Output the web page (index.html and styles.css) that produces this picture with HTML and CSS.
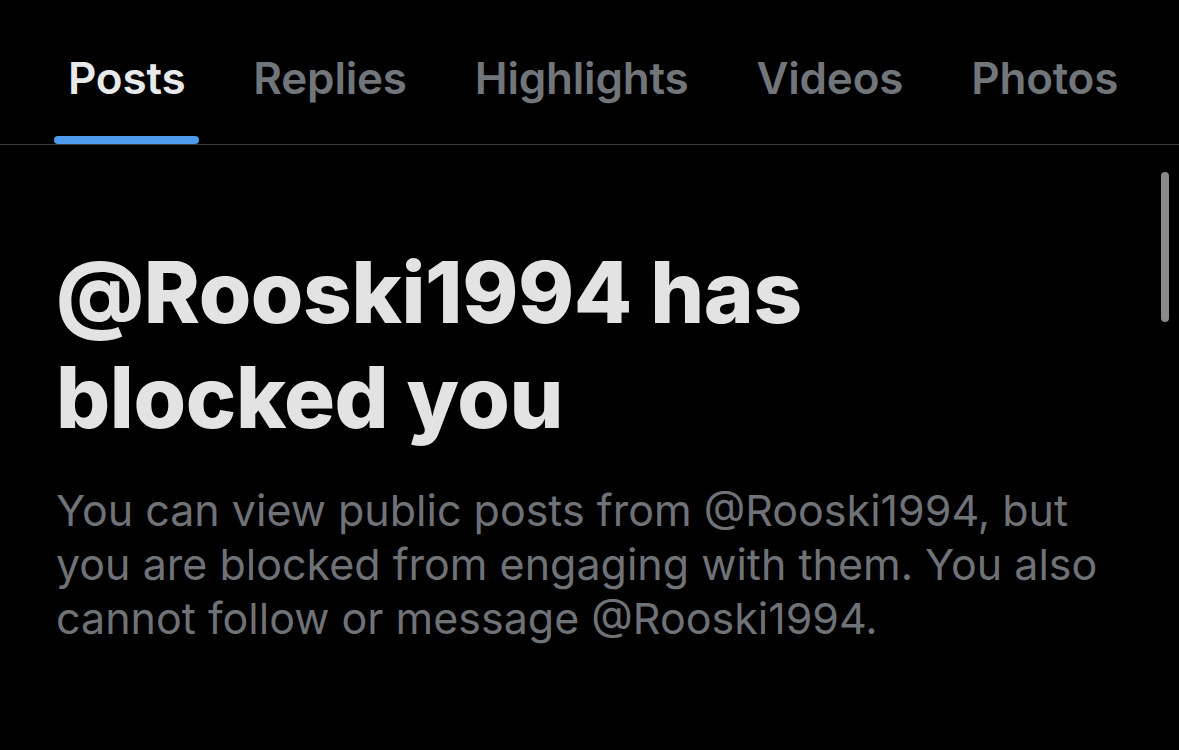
FILE: index.html
```html
<!DOCTYPE html>
<html>
<head>
<meta charset="utf-8">
<link rel="stylesheet" href="styles.css">
</head>
<body>
<div class="screen">
  <nav class="tabs">
    <div class="tab active"><span class="label">Posts</span><span class="indicator"></span></div>
    <div class="tab"><span class="label">Replies</span></div>
    <div class="tab"><span class="label">Highlights</span></div>
    <div class="tab"><span class="label">Videos</span></div>
    <div class="tab"><span class="label">Photos</span></div>
  </nav>
  <main class="content">
    <h1 class="title">@Rooski1994 has blocked you</h1>
    <p class="desc">You can view public posts from @Rooski1994, but you are blocked from engaging with them. You also cannot follow or message @Rooski1994.</p>
    <div class="scrollbar"></div>
  </main>
</div>
</body>
</html>
```
FILE: styles.css
```css
html, body {
  margin: 0;
  padding: 0;
  background: #000;
}
.screen {
  width: 1179px;
  height: 750px;
  background: #000;
  font-family: Inter, "Noto Sans", sans-serif;
  overflow: hidden;
}
.tabs {
  display: flex;
  gap: 40px;
  padding-left: 54px;
  height: 144px;
  border-bottom: 1px solid #3a3a3c;
  box-sizing: content-box;
}
.tab {
  position: relative;
  padding: 0 14px;
  display: flex;
  align-items: flex-start;
}
.label {
  display: block;
  margin-top: 52px;
  font-size: 44px;
  font-weight: 600;
  line-height: 52px;
  color: #71767b;
  letter-spacing: -0.2px;
}
.tab.active .label {
  color: #e7e9ea;
}
.indicator {
  position: absolute;
  left: 0;
  right: 0;
  bottom: 0;
  height: 8px;
  border-radius: 4px;
  background: #4c9ceb;
}
.content {
  position: relative;
  padding: 0 56px;
  height: 605px;
}
.title {
  margin: 0;
  padding-top: 95px;
  width: 900px;
  font-size: 85px;
  font-weight: 800;
  line-height: 105px;
  color: #e3e3e3;
  letter-spacing: -0.4px;
}
.desc {
  margin: 33px 0 0;
  width: 1065px;
  font-size: 43px;
  font-weight: 400;
  line-height: 54px;
  color: #6f7276;
}
.scrollbar {
  position: absolute;
  right: 10px;
  top: 27px;
  width: 8px;
  height: 150px;
  border-radius: 4px;
  background: #8a8a8a;
}
```
